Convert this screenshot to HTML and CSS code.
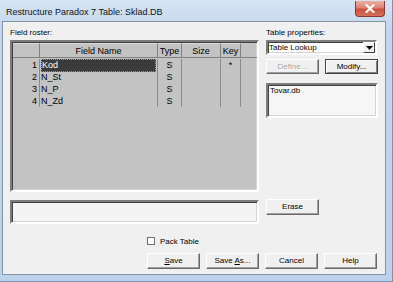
FILE: index.html
```html
<!DOCTYPE html>
<html>
<head>
<meta charset="utf-8">
<link rel="stylesheet" href="styles.css">
</head>
<body>
<div class="window">
  <div class="titlebar">
    <span class="title">Restructure Paradox 7 Table: Sklad.DB</span>
    <span class="close"><svg width="10" height="9" viewBox="0 0 10 9"><path d="M1.5 1 L8.5 8 M8.5 1 L1.5 8" stroke="#fff" stroke-width="2.2" stroke-linecap="square"/></svg></span>
  </div>
  <div class="client">
    <div class="top">
      <div class="leftcol">
        <div class="label">Field roster:</div>
        <div class="grid sunken">
          <div class="hrow">
            <div class="hc c-num"></div>
            <div class="hc c-name">Field Name</div>
            <div class="hc c-type">Type</div>
            <div class="hc c-size">Size</div>
            <div class="hc c-key">Key</div>
          </div>
          <div class="brow">
            <div class="bc c-num">1</div>
            <div class="bc c-name"><span class="sel">Kod</span></div>
            <div class="bc c-type">S</div>
            <div class="bc c-size"></div>
            <div class="bc c-key">*</div>
          </div>
          <div class="brow">
            <div class="bc c-num">2</div>
            <div class="bc c-name">N_St</div>
            <div class="bc c-type">S</div>
            <div class="bc c-size"></div>
            <div class="bc c-key"></div>
          </div>
          <div class="brow">
            <div class="bc c-num">3</div>
            <div class="bc c-name">N_P</div>
            <div class="bc c-type">S</div>
            <div class="bc c-size"></div>
            <div class="bc c-key"></div>
          </div>
          <div class="brow">
            <div class="bc c-num">4</div>
            <div class="bc c-name">N_Zd</div>
            <div class="bc c-type">S</div>
            <div class="bc c-size"></div>
            <div class="bc c-key"></div>
          </div>
        </div>
      </div>
      <div class="rightcol">
        <div class="label">Table properties:</div>
        <div class="combo sunken">
          <span class="combo-text">Table Lookup</span>
          <span class="combo-btn"><svg width="7" height="4" viewBox="0 0 7 4"><path d="M0 0 H7 L3.5 4 Z" fill="#000"/></svg></span>
        </div>
        <div class="btnrow">
          <div class="btn disabled"><span>Define...</span></div>
          <div class="btn default"><span>Modify...</span></div>
        </div>
        <div class="listbox sunken">Tovar.db</div>
      </div>
    </div>
    <div class="middle">
      <div class="msgbox sunken"></div>
      <div class="btn erase"><span>Erase</span></div>
    </div>
    <div class="checkrow">
      <span class="checkbox"></span>
      <span>Pack Table</span>
    </div>
    <div class="buttons">
      <div class="btn"><span><u>S</u>ave</span></div>
      <div class="btn"><span>Save <u>A</u>s...</span></div>
      <div class="btn"><span>Cancel</span></div>
      <div class="btn"><span>Help</span></div>
    </div>
  </div>
</div>
</body>
</html>
```

FILE: styles.css
```css
html, body {
  margin: 0;
  padding: 0;
}
body {
  font-family: "Liberation Sans", Arial, sans-serif;
  font-size: 8px;
  color: #000;
  background: #bcd3ec;
}
.window {
  width: 393px;
  height: 282px;
  box-sizing: border-box;
  padding: 0 6px 6px 2px;
  display: flex;
  flex-direction: column;
  background: linear-gradient(180deg, #d6e4f3 0px, #c3d6ec 30px, #bcd1ea 100%);
  border-right: 1px solid #7893b6;
  border-bottom: 1px solid #7893b6;
}
.titlebar {
  height: 21px;
  flex: none;
  display: flex;
  justify-content: space-between;
  align-items: flex-start;
}
.title {
  margin-left: 4px;
  margin-top: 7px;
  font-size: 9px;
  color: #111;
}
.close {
  margin-top: 1px;
  margin-right: 1px;
  width: 30px;
  height: 16px;
  box-sizing: border-box;
  border: 1px solid #8a3a36;
  border-top: none;
  border-radius: 0 0 4px 4px;
  background: linear-gradient(180deg, #eab0a2 0%, #de8274 45%, #cc5040 55%, #d87058 100%);
  display: flex;
  align-items: center;
  justify-content: center;
}
.client {
  flex: 1;
  background: #f0f0f0;
  border: 1px solid #8593a6;
  padding: 6px 0 0 7px;
  display: flex;
  flex-direction: column;
}
.top {
  display: flex;
  gap: 7px;
}
.label {
  height: 10px;
  line-height: 10px;
  margin-bottom: 2px;
}
.leftcol {
  width: 249px;
  display: flex;
  flex-direction: column;
}
.sunken {
  box-sizing: border-box;
  border-style: solid;
  border-width: 2px;
  border-color: #7d7d7d #ffffff #ffffff #7d7d7d;
  box-shadow: inset 1px 1px 0 #404040, inset -1px -1px 0 #d4d4d4;
}
.grid {
  height: 152px;
  background: #c3c3c3;
  padding: 1px 0 0 1px;
}
.hrow {
  display: flex;
  height: 14px;
  border-bottom: 1px solid #808080;
}
.hc {
  box-sizing: border-box;
  height: 14px;
  line-height: 14px;
  font-size: 9px;
  text-align: center;
  border-right: 1px solid #808080;
  border-top: 1px solid #dcdcdc;
}
.c-num { width: 27px; }
.c-name { width: 118px; }
.c-type { width: 24px; }
.c-size { width: 39px; }
.c-key { width: 20px; }
.brow {
  display: flex;
  height: 12px;
}
.hrow + .brow { margin-top: 1px; }
.bc {
  box-sizing: border-box;
  height: 12px;
  line-height: 12px;
  font-size: 9px;
  border-right: 1px solid #8a8a8a;
  text-align: center;
}
.bc.c-num {
  text-align: right;
  padding-right: 2px;
}
.bc.c-name {
  text-align: left;
  padding-left: 1px;
}
.sel {
  display: block;
  height: 13px;
  line-height: 12px;
  box-sizing: border-box;
  margin-right: 1px;
  background: #3b3b3b;
  color: #fff;
  outline: 1px dotted #9a9a9a;
  outline-offset: -1px;
  padding-left: 1px;
}
.rightcol {
  width: 112px;
  display: flex;
  flex-direction: column;
}
.combo {
  height: 15px;
  width: 111px;
  background: #fff;
  display: flex;
  align-items: center;
  justify-content: space-between;
  padding-left: 1px;
}
.combo-text {
  line-height: 11px;
}
.combo-btn {
  width: 12px;
  height: 11px;
  box-sizing: border-box;
  background: #f0f0f0;
  border-style: solid;
  border-width: 1px;
  border-color: #fff #404040 #404040 #fff;
  display: flex;
  align-items: center;
  justify-content: center;
}
.btnrow {
  display: flex;
  gap: 6px;
  margin-top: 4px;
}
.btn {
  box-sizing: border-box;
  width: 53px;
  height: 16px;
  background: #f0f0f0;
  border-style: solid;
  border-width: 1px;
  border-color: #ffffff #696969 #696969 #ffffff;
  box-shadow: inset -1px -1px 0 #a0a0a0;
  display: flex;
  align-items: center;
  justify-content: center;
  line-height: 10px;
}
.btn span {
  white-space: pre;
}
.btnrow .btn {
  height: 15px;
}
.btn.disabled {
  color: #a3a3a3;
  text-shadow: 1px 1px 0 #fff;
}
.btn.default {
  border-color: #404040;
  box-shadow: inset 1px 1px 0 #fff, inset -1px -1px 0 #808080;
}
.listbox {
  margin-top: 9px;
  height: 35px;
  background: #f6f6f6;
  padding: 1px 2px;
  line-height: 10px;
}
.middle {
  display: flex;
  gap: 7px;
  margin-top: 8px;
  align-items: flex-start;
}
.msgbox {
  width: 249px;
  height: 24px;
  background: #f4f4f4;
}
.erase {
  margin-top: -1px;
}
.checkrow {
  display: flex;
  align-items: center;
  margin-top: 12px;
  margin-left: 137px;
  height: 10px;
  gap: 5px;
}
.checkbox {
  width: 8px;
  height: 8px;
  box-sizing: border-box;
  background: #fff;
  border: 1px solid #707070;
}
.buttons {
  display: flex;
  gap: 6px;
  margin-top: 7px;
  margin-left: 137px;
}
u {
  text-decoration: underline;
  text-underline-offset: 1px;
}
```
